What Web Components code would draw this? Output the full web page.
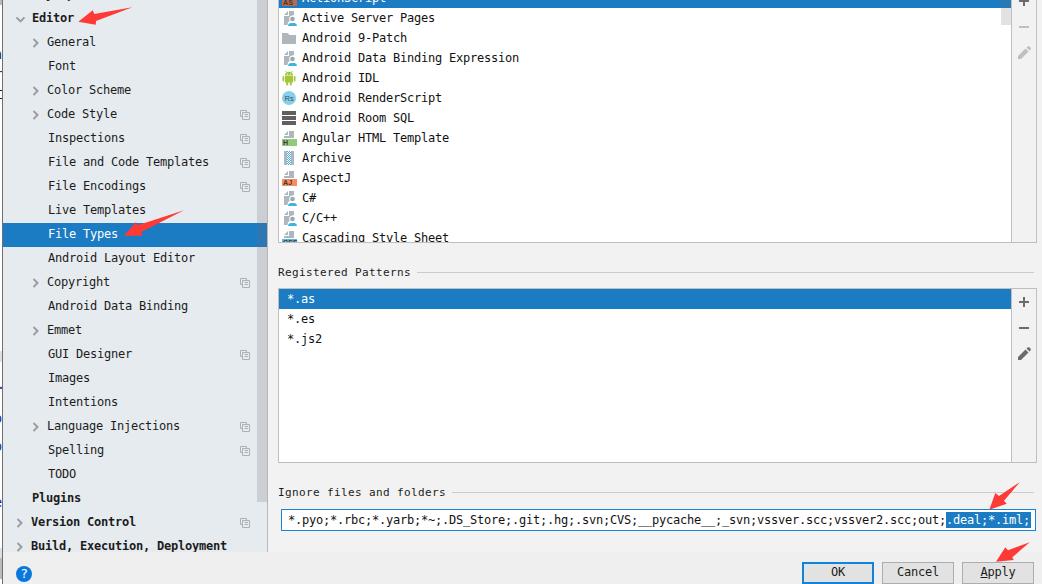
<!DOCTYPE html>
<html lang="en"><head><meta charset="utf-8"><title>Settings</title>
<style>
html,body{margin:0;height:100%;overflow:hidden;background:#f1f1f1}
body{font:12px/20px "DejaVu Sans Mono","Liberation Mono",monospace;letter-spacing:-.224px;color:#1c1c1c}
</style></head><body>
<settings-window></settings-window>
<script>
const define=(name,html,init)=>customElements.define(name,class extends HTMLElement{
  connectedCallback(){
    if(this.shadowRoot)return;
    const r=this.attachShadow({mode:'open'});
    r.innerHTML=html;
    if(init)init(this,r);
  }
});

const page='<path d="M7 1h5v4L9 6 7.500 8l.5 3-2 1-.5 3H2V6h5z" fill="#adb7bd"/><path d="M6 1v4H2z" fill="#adb7bd"/>';
const topPage='<path d="M7 1h5v7H2V6h5z" fill="#adb7bd"/><path d="M6 1v4H2z" fill="#adb7bd"/>';
const badge=(c,t)=>topPage+`<path fill="${c}" d="M0 9h15v7H0z"/><text x="1" y="15" font-family="Liberation Sans" font-weight="bold" font-size="7" letter-spacing=".2" fill="#3c3b36">${t}</text>`;
const icons={
  as:badge('#bb6850','AS'), html:badge('#93c97c','H'), aj:badge('#f98b5e','AJ'), css:badge('#5db8dc','CSS'),
  user:page+'<circle cx="10.500" cy="9" r="3.200" fill="#fff"/><circle cx="10.500" cy="9" r="2.300" fill="#9ba8b0"/><path d="M6 16c0-2.500 2-3 4.500-3s4.500.5 4.500 3z" fill="#3fb3e0"/>',
  folder:'<path d="M0 3h5.500l2 2H14v9H0z" fill="#adb7bd"/>',
  droid:'<g fill="#a4c639"><path d="M3 5.500a4 3.700 0 0 1 8 0z"/><path d="M3.500.8l1.500 2M10.500.8L9 2.800" stroke="#a4c639" stroke-width=".8"/><path d="M3 6h8v6.500H3z"/><rect x=".5" y="6" width="1.800" height="5.500" rx=".9"/><rect x="11.700" y="6" width="1.800" height="5.500" rx=".9"/><rect x="4.200" y="11" width="2" height="4.500" rx=".8"/><rect x="7.800" y="11" width="2" height="4.500" rx=".8"/></g><path d="M5 3.500h1v1H5zM8 3.500h1v1H8z" fill="#fff"/>',
  rs:'<circle cx="7" cy="8" r="7" fill="#87cfea"/><text x="2.400" y="10.800" font-family="Liberation Sans" font-size="7.500" letter-spacing=".3" fill="#38505c">Rs</text>',
  sql:'<path d="M0 1h14v4H0zM0 6h14v4H0zM0 11h14v4H0z" fill="#606060"/>',
  zip:'<path d="M2 1h3v14H2zM9 1h3v14H9z" fill="#adb7bd"/><path d="M5.500 1v14M7.500 1v14" stroke="#3fb3e0" stroke-width="1" stroke-dasharray="1 1"/><path d="M6.500 2v13M8.500 2v13" stroke="#3fb3e0" stroke-width="1" stroke-dasharray="1 1"/>'
};

define('tree-row',`<style>
:host{display:flex;height:24px;flex:none;align-items:center;box-sizing:border-box;padding:0 17px 0 12px;line-height:24px;white-space:pre}
:host([level="1"]){padding-left:27px}
:host([bold]){font-weight:bold}
:host([selected]){background:#1b7cc3;color:#fff}
.a{width:16px;height:12px;flex:none;display:block;margin-left:1px;margin-top:-1px}
.t{flex:1;margin-left:-1px;margin-top:-2px}
:host(:not([arrow])) .t,:host([arrow=down]) .t{margin-left:0}
:host([level="1"]:not([arrow])) .t{margin-left:2px}
:host([level="1"][arrow]) .t{margin-left:1px}
:host([level="1"]) .a{margin-left:0}
:host([level="0"]) .r{transform:translateX(-2px)}
.c{width:10px;height:10px;display:none}
:host([copy]) .c{display:block}
.r,.d{display:none}
:host([arrow=right]) .r,:host([arrow=down]) .d{display:inline}
</style><svg class="a" viewBox="0 0 16 12"><g fill="none" stroke="#9a9c9e" stroke-width="1.900"><path class="r" d="M3.500 2l4 4-4 4"/><path class="d" d="M.5 4.300l4 4 4-4"/></g></svg><span class="t"><slot></slot></span>
<svg class="c" viewBox="0 0 10 10"><path d="M2.500 6.500h-2v-6h6v2M2.500 2.500h7v7h-7zM4.500 4.500H8M4.500 6.500H8" fill="none" stroke="#a9b2b9"/></svg>`);

define('settings-tree',`<style>
:host{display:block;position:relative;height:552px;width:264px;overflow:hidden;background:#e6ebef;border-right:1px solid #b7b7b7}
.rows{display:flex;flex-direction:column;margin-top:-17px}
.thumb{position:absolute;right:0;top:0;width:10px;height:502px;background:rgba(110,110,120,.22)}
</style><div class="rows"><slot></slot></div><div class="thumb"></div>`);

define('type-row',`<style>
:host{display:flex;height:20px;flex:none;align-items:center;padding-left:3px;white-space:pre}
:host([selected]){background:#1b7cc3;color:#fff}
:host([plain]){padding-left:8px}
:host([plain]) svg{display:none}
svg{width:16px;height:16px;margin-right:4px;flex:none;margin-top:0}
span{margin-top:-1px}
</style><svg viewBox="0 0 16 16"></svg><span><slot></slot></span>`,(h,r)=>{r.querySelector('svg').innerHTML=icons[h.getAttribute('icon')]||''});

define('tool-strip',`<style>
:host{display:flex;flex-direction:column;width:24px;flex:none;border-left:1px solid #bfbfbf;background:#f2f2f2;align-items:center;padding-top:5px;gap:10px;box-sizing:content-box;--on:#6b6b6b;--off:#6b6b6b}
:host([dim]){--off:#bfbfbf}
svg{width:16px;height:16px;flex:none}
</style><svg viewBox="0 0 16 16"><path d="M3 8h10M8 3v10" stroke="var(--on)" stroke-width="2"/></svg>
<svg viewBox="0 0 16 16"><path d="M3 8h10" stroke="var(--off)" stroke-width="2"/></svg>
<svg viewBox="0 0 16 16"><path d="M2 14v-3l7.500-7.500 3 3L5 14zM10.500 2.500l1-1q1-.7 2 0l1 1q.7 1 0 2l-1 1z" fill="var(--off)"/></svg>`);

define('list-panel',`<style>
:host{display:flex;box-sizing:border-box;border:1px solid #bfbfbf;width:759px;overflow:hidden;background:#fff;flex:none}
.l{flex:1;display:flex;flex-direction:column;position:relative;color:#111}
.thumb{display:none;position:absolute;right:0;top:0;width:10px;height:37px;background:rgba(110,110,110,.2)}
:host([types]){height:256px;margin-top:-13px}
:host([types]) tool-strip{padding-top:5px}
:host([types]) .thumb{display:block}
:host([patterns]){height:175px}
</style><div class="l"><slot></slot><div class="thumb"></div></div><tool-strip></tool-strip>`,(h,r)=>{if(h.hasAttribute('types'))r.querySelector('tool-strip').setAttribute('dim','')});

define('section-title',`<style>
:host{display:flex;align-items:center;height:20px;width:756px;font-size:11px;letter-spacing:.378px;gap:6px;flex:none}
span{margin-top:2px}
i{flex:1;height:1px;background:#cbcbcb}
</style><span><slot></slot></span><i></i>`);

define('ignore-field',`<style>
:host{display:flex;align-items:center;box-sizing:border-box;width:755px;height:22px;border:1px solid #1883d7;background:#fff;margin-left:3px;padding-left:6px;white-space:pre;color:#111;flex:none}
::slotted(mark){background:#1b7cc3;color:#fff;height:16px;line-height:16px;display:block;width:85px}
</style><slot></slot>`);

define('dialog-button',`<style>
:host{display:block;box-sizing:border-box;width:72px;height:22px;border:1px solid #adadad;background:#e2e2e2;text-align:center;line-height:19px}
:host([primary]){border:2px solid #1283da;line-height:17px}
</style><slot></slot>`);

define('editor-edge',`<style>
:host{display:block;position:relative;width:2px;height:584px;background:#fff;border-right:1px solid #707070;overflow:hidden;color:#333}
b{position:absolute;left:0;width:2px;background:#e0e0e0}
span{position:absolute;right:0;font-size:14px;line-height:20px}
</style><b style="top:0;height:5px;background:#bbb"></b><span style="top:44px">a</span><span style="top:64px;right:-1px">r</span><b style="top:90px;height:1px;background:#222"></b><b style="top:98px;height:1px;background:#222"></b>
<b style="top:351px;height:11px"></b><b style="top:386px;height:1px"></b><b style="top:387px;height:2px;background:#5046a0"></b>
<span style="top:408px;color:#1a3a8a">o</span><span style="top:436px;color:#1a3a8a">o</span><span style="top:492px;color:#1515b8">e</span>
<b style="top:548px;height:10px"></b><b style="top:558px;height:21px;background:#bbb"></b>`);

define('arrow-marks',`<style>:host{position:absolute;inset:0;pointer-events:none}svg{display:block}</style>
<svg width="1042" height="584" viewBox="0 0 1042 584" fill="#fd3a36"><path d="M78.300 21.700L92.700 10.300 94.300 14 132.300 7.300 96 21 95.700 24.700zM124 235.700L136 222l1.700 3.300L184 210.300 141.300 232l1 3.700zM989.300 509.700L995.300 493l3.700 3 21-14-16 18.700 2.700 3zM996 561.700l9.300-14.400 2.700 3 21.700-8-17.400 15 1.400 2.700z"/></svg>`);

const tree=[['Keymap',0,'','b'],['Editor',0,'down','b'],['General',1,'right'],['Font',1],['Color Scheme',1,'right'],['Code Style',1,'right','c'],['Inspections',1,'','c'],['File and Code Templates',1,'','c'],['File Encodings',1,'','c'],['Live Templates',1],['File Types',1,'','s'],['Android Layout Editor',1],['Copyright',1,'right','c'],['Android Data Binding',1],['Emmet',1,'right'],['GUI Designer',1,'','c'],['Images',1],['Intentions',1],['Language Injections',1,'right','c'],['Spelling',1,'','c'],['TODO',1],['Plugins',0,'','b'],['Version Control',0,'right','bc'],['Build, Execution, Deployment',0,'right','b']];
const types=[['as','ActionScript'],['user','Active Server Pages'],['folder','Android 9-Patch'],['user','Android Data Binding Expression'],['droid','Android IDL'],['rs','Android RenderScript'],['sql','Android Room SQL'],['html','Angular HTML Template'],['zip','Archive'],['aj','AspectJ'],['user','C#'],['user','C/C++'],['css','Cascading Style Sheet']];
const treeRows=tree.map(([t,l,a,f=''])=>`<tree-row level="${l}" ${a?`arrow="${a}"`:''} ${f.includes('b')?'bold':''} ${f.includes('c')?'copy':''} ${f.includes('s')?'selected':''}>${t}</tree-row>`).join('');
const typeRows=types.map(([i,t],n)=>`<type-row icon="${i}" ${n?'':'selected'}>${t}</type-row>`).join('');

define('settings-window',`<style>
:host{display:grid;grid-template-columns:3px 265px 1fr;grid-template-rows:552px 32px;width:1042px;height:584px;position:relative;overflow:hidden;background:#f2f2f2}
editor-edge{grid-row:1/3}
main{display:flex;flex-direction:column;padding-left:10px;overflow:hidden}
.first{margin:19px 0 6px}.second{margin:19px 0 7px}
footer{grid-column:2/4;background:#efefef;display:flex;align-items:flex-start;padding:10px 8px 0 13px;gap:8px}
.help{width:16px;height:16px;border-radius:50%;background:#0a78db;color:#fff;text-align:center;line-height:16px;margin:4px auto 0 0;font-size:13px}
</style><editor-edge></editor-edge><settings-tree>${treeRows}</settings-tree>
<main><list-panel types>${typeRows}</list-panel>
<section-title class="first">Registered Patterns</section-title>
<list-panel patterns><type-row plain selected>*.as</type-row><type-row plain>*.es</type-row><type-row plain>*.js2</type-row></list-panel>
<section-title class="second">Ignore files and folders</section-title>
<ignore-field><span>*.pyo;*.rbc;*.yarb;*~;.DS_Store;.git;.hg;.svn;CVS;__pycache__;_svn;vssver.scc;vssver2.scc;out;</span><mark>.deal;*.iml;</mark></ignore-field></main>
<footer><div class="help">?</div><dialog-button primary>OK</dialog-button><dialog-button>Cancel</dialog-button><dialog-button><u>A</u>pply</dialog-button></footer><arrow-marks></arrow-marks>`);
</script></body></html>
